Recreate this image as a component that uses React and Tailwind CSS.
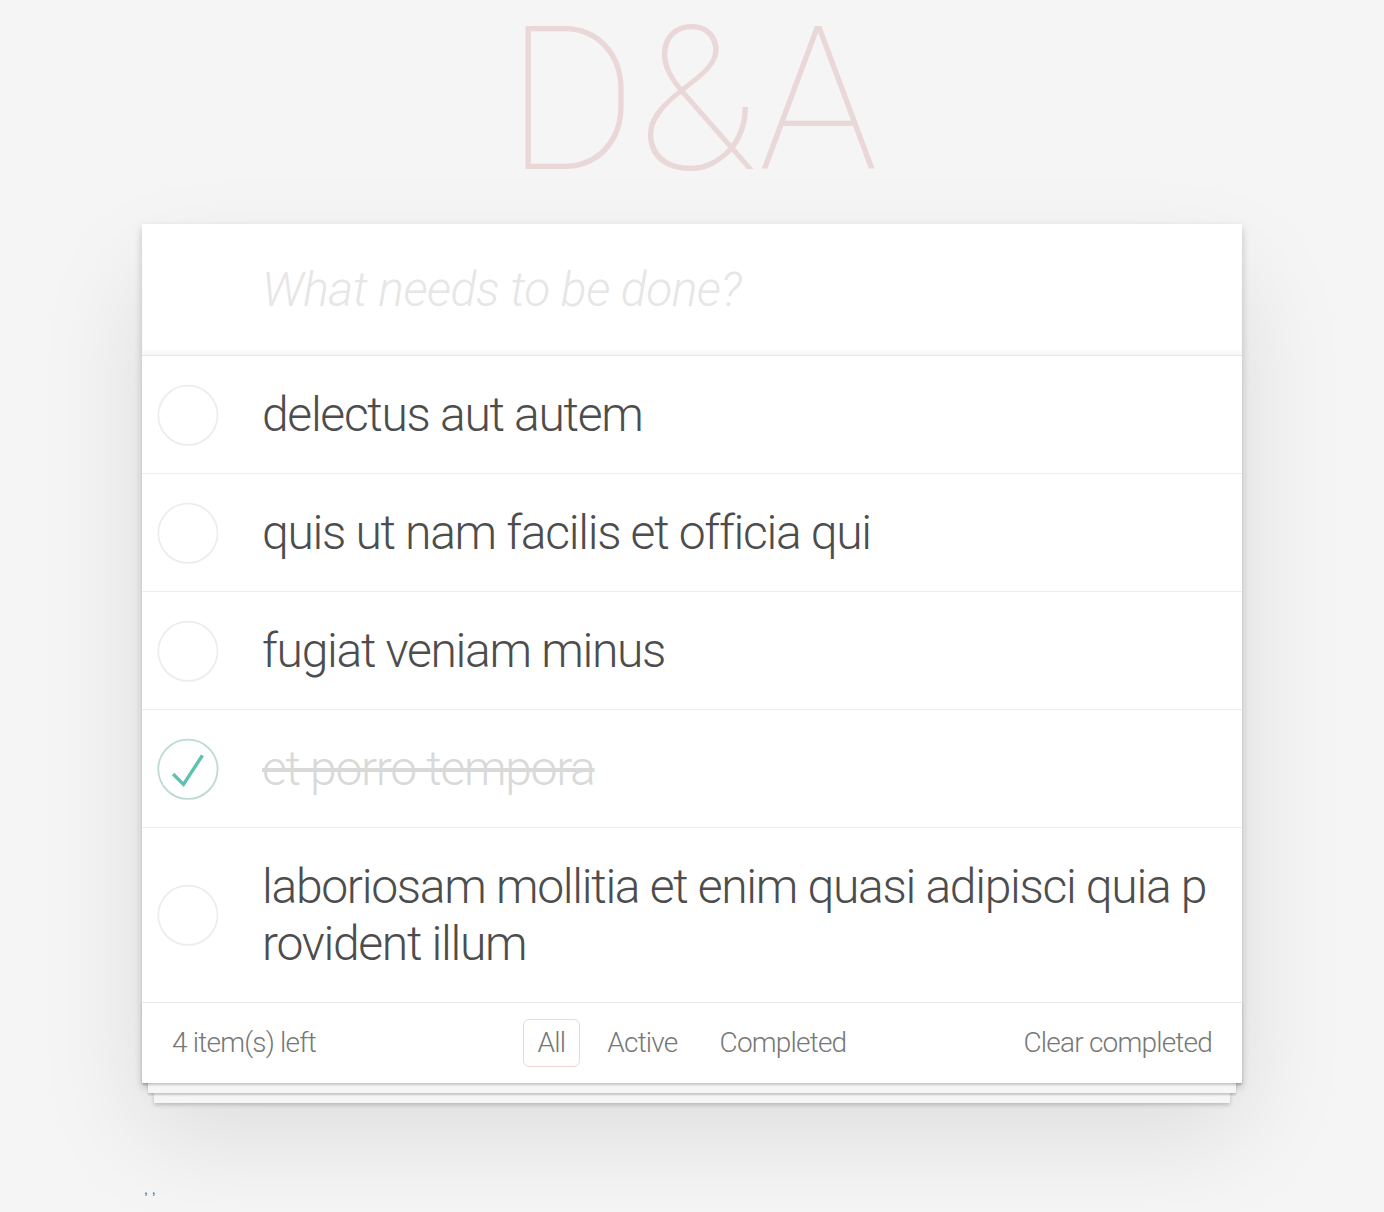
import React, { useState } from "react";

const initialTodos = [
  { id: 1, title: "delectus aut autem", completed: false },
  { id: 2, title: "quis ut nam facilis et officia qui", completed: false },
  { id: 3, title: "fugiat veniam minus", completed: false },
  { id: 4, title: "et porro tempora", completed: true },
  {
    id: 5,
    title: "laboriosam mollitia et enim quasi adipisci quia provident illum",
    completed: false,
  },
];

// round toggle, same drawing as the todomvc background svg
const Toggle = ({ checked, onClick }) => (
  <svg
    width="80"
    height="80"
    viewBox="-10 -18 100 135"
    className="shrink-0 cursor-pointer"
    onClick={onClick}
  >
    <circle
      cx="50"
      cy="50"
      r="50"
      fill="none"
      stroke={checked ? "#bddad5" : "#ededed"}
      strokeWidth="3"
    />
    {checked && <path fill="#5dc2af" d="M72 25L42 71 27 56l-4 4 20 20 34-52z" />}
  </svg>
);

const App = () => {
  const [todos, setTodos] = useState(initialTodos);
  const [filter, setFilter] = useState("All");

  const toggle = (id) =>
    setTodos(todos.map((t) => (t.id === id ? { ...t, completed: !t.completed } : t)));

  const left = todos.filter((t) => !t.completed).length;

  return (
    <div className="min-h-screen bg-[#f5f5f5] font-['Roboto','Liberation_Sans',sans-serif] font-light text-[#4d4d4d] pt-[1px]">
      <h1 className="text-center text-[200px] leading-[200px] font-thin text-[rgba(175,47,47,0.15)] h-[200px]">
        D&amp;A
      </h1>

      <section className="relative w-[1100px] mx-auto mt-[23px] bg-white shadow-[0_4px_8px_0_rgba(0,0,0,0.2),0_50px_100px_0_rgba(0,0,0,0.1)]">
        <input
          className="block w-full pt-[32px] pb-[32px] pl-[120px] pr-[32px] text-[48px] leading-[1.4] font-light tracking-[-0.5px] bg-white outline-none shadow-[inset_0_-4px_2px_rgba(0,0,0,0.03)] placeholder:italic placeholder:text-[#e6e6e6]"
          placeholder="What needs to be done?"
        />

        <ul className="border-t border-[#e6e6e6]">
          {todos.map((t, i) => (
            <li
              key={t.id}
              className={
                "flex items-center " +
                (i < todos.length - 1 ? "border-b border-[#ededed]" : "")
              }
            >
              <Toggle checked={t.completed} onClick={() => toggle(t.id)} />
              <label
                className={
                  "block flex-1 min-w-0 pl-[40px] pr-[30px] py-[30px] text-[48px] leading-[57px] tracking-[-1.3px] break-all " +
                  (t.completed ? "line-through text-[#d9d9d9]" : "text-[#4d4d4d]")
                }
              >
                {t.title}
              </label>
            </li>
          ))}
        </ul>

        <footer className="grid grid-cols-[1fr_auto_1fr] items-center h-[81px] px-[30px] border-t border-[#e6e6e6] text-[28px] tracking-[-0.8px] text-[#777] bg-white shadow-[0_2px_2px_rgba(0,0,0,0.2),0_16px_0_-6px_#f6f6f6,0_18px_2px_-6px_rgba(0,0,0,0.2),0_32px_0_-12px_#f6f6f6,0_34px_4px_-12px_rgba(0,0,0,0.2)]">
          <span>{left} item(s) left</span>
          <ul className="flex">
            {["All", "Active", "Completed"].map((f) => (
              <li key={f} className="mx-[6px]">
                <button
                  onClick={() => setFilter(f)}
                  className={
                    "px-[14px] py-[6px] rounded-[6px] border leading-[1.2] " +
                    (filter === f
                      ? "border-[rgba(175,47,47,0.2)]"
                      : "border-transparent")
                  }
                >
                  {f}
                </button>
              </li>
            ))}
          </ul>
          <button
            className="justify-self-end"
            onClick={() => setTodos(todos.filter((t) => !t.completed))}
          >
            Clear completed
          </button>
        </footer>
      </section>

      <p className="w-[1100px] mx-auto mt-[96px] pl-[2px] text-[14px] text-[#555] font-['Liberation_Sans',sans-serif] leading-[20px]">
        , ,
      </p>
    </div>
  );
};

export default App;
